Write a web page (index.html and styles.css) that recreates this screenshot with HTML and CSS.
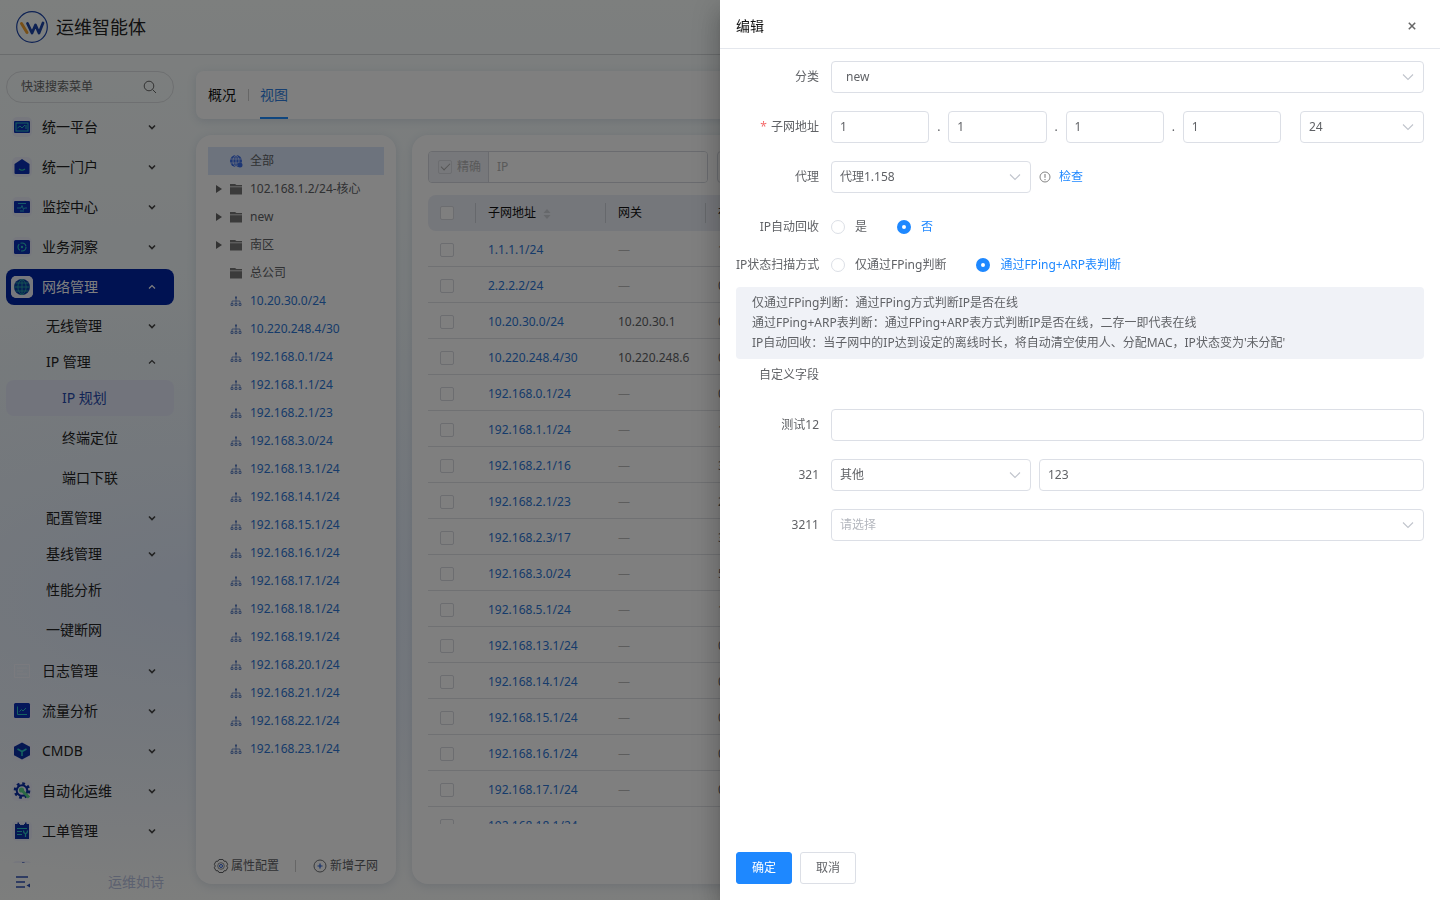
FILE: index.html
```html
<!DOCTYPE html>
<html lang="zh-CN">
<head>
  <meta charset="UTF-8">
  <title>运维智能体</title>
  <meta name="viewport" content="width=device-width,initial-scale=1">
  <link rel="stylesheet" href="styles.css">
</head>
<body>
  <!-- shared icons -->
  <svg class="sprite" aria-hidden="true">
    <symbol id="i-down" viewBox="0 0 12 12"><path d="M3 4.500l3 3 3-3" fill="none" stroke="currentColor" stroke-width="1.600"/></symbol>
    <symbol id="i-up" viewBox="0 0 12 12"><path d="M3 7.500l3-3 3 3" fill="none" stroke="currentColor" stroke-width="1.200"/></symbol>
    <symbol id="i-arrow" viewBox="0 0 12 12"><path d="M1 3.500l5 5 5-5" fill="none" stroke="currentColor" stroke-width="1.100"/></symbol>
    <symbol id="i-folder" viewBox="0 0 14 14"><path d="M1 2h5l1.500 1h5.500v1.500H1z"/><path d="M1 5.200h12V12.500H1z"/></symbol>
    <symbol id="i-net" viewBox="0 0 14 14">
      <path d="M7 4v5M3 9V7h8v2" fill="none" stroke="currentColor" stroke-width=".8"/>
      <path d="M6 2.500h2v2H6z"/>
      <path d="M2 9.500h2v2H2zM6 9.500h2v2H6zM10 9.500h2v2h-2z" fill="none" stroke="currentColor" stroke-width=".9"/>
    </symbol>
    <symbol id="i-globe" viewBox="0 0 14 14">
      <circle cx="7" cy="7" r="6"/>
      <path d="M1 5h12M1 9h12M7 1v12M7 1C3 4 3 10 7 13M7 1c4 3 4 9 0 12" fill="none" stroke="#dfe9ff" stroke-width=".7"/>
      <circle cx="11" cy="11" r="2.500"/>
    </symbol>
    <symbol id="m-platform" viewBox="0 0 20 20">
      <rect x="2" y="4" width="16" height="12" rx="1" fill="#0a2fb4"/>
      <rect x="4" y="6" width="12" height="8" fill="none" stroke="#2bc4c0" stroke-width="1"/>
      <path d="M5.500 11l2.500-2 2 2 3-3M14 8v4" fill="none" stroke="#2bc4c0"/>
    </symbol>
    <symbol id="m-portal" viewBox="0 0 20 20">
      <path d="M10 2l7.500 5v9q0 1-1 1h-13q-1 0-1-1V7z" fill="#0a2fb4"/>
      <path d="M7 12q3 2.500 6 0" fill="none" stroke="#2bc4a0" stroke-width="1.200"/>
    </symbol>
    <symbol id="m-monitor" viewBox="0 0 20 20">
      <rect x="2" y="4" width="16" height="12" rx="1" fill="#0a2fb4"/>
      <path d="M6 6.500h8M5 11h4l1-2.500 1.500 4 1-1.500H15M8 14h4" fill="none" stroke="#2bb4d0"/>
    </symbol>
    <symbol id="m-insight" viewBox="0 0 20 20">
      <rect x="2" y="3" width="16" height="14" rx="1.500" fill="#0a2fb4"/>
      <circle cx="10" cy="10" r="4" fill="none" stroke="#2bc4c0" stroke-width="1.200" stroke-dasharray="7 1.400"/>
      <circle cx="10" cy="10" r="1.200" fill="#2bc4c0"/>
    </symbol>
    <symbol id="m-network" viewBox="0 0 22 22">
      <rect width="22" height="22" rx="5" fill="#eef1fb"/>
      <circle cx="11" cy="11" r="8" fill="#0a3fa4"/>
      <path d="M3 11h16M4.500 7h13M4.500 15h13M11 3v16M11 3C5.500 7 5.500 15 11 19M11 3c5.500 4 5.500 12 0 16" fill="none" stroke="#2baaa8" stroke-width=".9"/>
    </symbol>
    <symbol id="m-log" viewBox="0 0 20 20">
      <path d="M2.500 3.500h15v13h-15zM5 7h10M5 10h6M5 13h10" fill="none" stroke="#f8f6fc" stroke-opacity=".8"/>
    </symbol>
    <symbol id="m-flow" viewBox="0 0 20 20">
      <rect x="2" y="2" width="16" height="15" rx="1.500" fill="#0a2fb4"/>
      <path d="M5.500 5.500v8H15M7.500 10.500l2-2 1.500 1.500 3-3" fill="none" stroke="#2bc4c0"/>
    </symbol>
    <symbol id="m-cmdb" viewBox="0 0 20 20">
      <path d="M10 1.500l8 4.300v8.400l-8 4.300-8-4.300V5.800z" fill="#0a2fa4"/>
      <path d="M5.500 8L10 10.500 14.500 8M10 10.500V15" fill="none" stroke="#2bc4c0" stroke-width="1.600"/>
    </symbol>
    <symbol id="m-auto" viewBox="0 0 20 20">
      <circle cx="10" cy="9.500" r="7" fill="none" stroke="#0a2fa4" stroke-width="2.600" stroke-dasharray="2.750"/>
      <circle cx="10" cy="9.500" r="5.300" fill="none" stroke="#0a2fa4" stroke-width="2"/>
      <circle cx="9.500" cy="9" r="2.600" fill="#5ad48a"/>
      <path d="M11 10.500l6 6" stroke="#5ad48a" stroke-width="3"/>
    </symbol>
    <symbol id="m-order" viewBox="0 0 20 20">
      <path d="M3 3h14v15H3z" fill="#0a2fa4"/>
      <path d="M5.500 1.500H7v3H5.500zM13 1.500h1.500v3H13z" fill="#0a2fa4"/>
      <path d="M8 3.500h4" stroke="#dfe5f8"/>
      <path d="M5 7.500h10M5 10.500h5M5 13.500h5M13.500 16v-4M11.500 9.500q0 3 2 3t2-3" fill="none" stroke="#2bc4c0" stroke-width="1.200"/>
    </symbol>
  </svg>

  <div class="app">
    <header class="topbar">
      <svg class="logo" viewBox="0 0 32 32">
        <circle cx="16" cy="16" r="15.300" fill="none" stroke="#1c44a8" stroke-width="1.200"/>
        <path d="M5.500 12.500l5.500 9" stroke="#f0a030" stroke-width="3" stroke-linecap="round"/>
        <path d="M11.500 12.500l4.500 9.500 3.500-8 3.500 8 4-10" fill="none" stroke="#1c44a8" stroke-width="2.800" stroke-linecap="round" stroke-linejoin="round"/>
      </svg>
      <span class="brand">运维智能体</span>
    </header>

    <div class="layout">
      <aside class="sidebar">
        <label class="menu-search">
          <input type="text" placeholder="快速搜索菜单" aria-label="快速搜索菜单">
          <svg viewBox="0 0 14 14"><circle cx="6" cy="6" r="4.800" fill="none" stroke="currentColor"/><path d="M9.500 9.500l3.500 3.500" stroke="currentColor"/></svg>
        </label>
        <nav class="menu" id="menu"></nav>
        <div class="side-foot">
          <svg viewBox="0 0 14 14"><path d="M0 2h12M0 7h9M0 12h9" stroke="#2b4fb4" stroke-width="1.300"/><path d="M14 8.500v4l-3.500-2z" fill="#2b4fb4"/></svg>
          <span>运维如诗</span>
        </div>
      </aside>

      <main class="main">
        <div class="card tabs">
          <a href="#" class="tab">概况</a>
          <i class="tab-line"></i>
          <a href="#" class="tab active">视图</a>
        </div>
        <div class="panels">
          <section class="card tree-card">
            <ul class="tree" id="tree"></ul>
            <div class="tree-foot">
              <button type="button">
                <svg viewBox="0 0 16 16" fill="none" stroke="currentColor"><path d="M6 1.500h4l1 1.700 2 .1 1.700 3-1 1.700 1 1.700-1.700 3-2 .1-1 1.700H6l-1-1.700-2-.1-1.700-3 1-1.700-1-1.700 1.700-3 2-.1z"/><circle cx="8" cy="8" r="3.300" stroke-width=".7"/><circle cx="8" cy="8" r="1.500" stroke="#2b5fd4"/></svg>属性配置
              </button>
              <i class="tab-line"></i>
              <button type="button">
                <svg viewBox="0 0 16 16" fill="none" stroke="currentColor"><circle cx="8" cy="8" r="6" stroke-width=".9"/><path d="M5.500 8h5M8 5.500v5" stroke="#2b5fd4" stroke-width="1.200"/></svg>新增子网
              </button>
            </div>
          </section>

          <section class="card table-card">
            <div class="filters">
              <div class="ip-filter">
                <label class="exact"><input type="checkbox" class="check" checked disabled>精确</label>
                <input type="text" placeholder="IP" aria-label="IP">
              </div>
              <input type="text" class="filter-input" aria-label="关键字">
            </div>
            <div class="table-wrap">
              <table>
                <colgroup><col class="c-check"><col class="c-sub"><col class="c-gw"><col></colgroup>
                <thead>
                  <tr>
                    <th><input type="checkbox" class="check" aria-label="全选"></th>
                    <th>子网地址 <svg class="sort" viewBox="0 0 8 12"><path d="M4 1l3.500 4h-7zM4 11l3.500-4h-7z"/></svg></th>
                    <th>网关</th>
                    <th>在线</th>
                  </tr>
                </thead>
                <tbody id="rows"></tbody>
              </table>
            </div>
          </section>
        </div>
      </main>
    </div>
  </div>

  <div class="mask"></div>

  <!-- edit drawer -->
  <form class="drawer">
    <header class="drawer-head">
      <h2>编辑</h2>
      <button type="button" class="close" aria-label="关闭"><svg viewBox="0 0 10 10"><path d="M1 1l8 8M9 1l-8 8" stroke="currentColor" stroke-width="1.900"/></svg></button>
    </header>

    <div class="drawer-body">
      <div class="field">
        <label for="category">分类</label>
        <div class="control">
          <div class="select wide-pad"><select id="category"><option>new</option></select><svg><use href="#i-arrow"/></svg></div>
        </div>
      </div>

      <div class="field required">
        <label for="oct1">子网地址</label>
        <div class="control octets">
          <input class="input" type="text" id="oct1" value="1"><span>.</span>
          <input class="input" type="text" value="1" aria-label="第二段"><span>.</span>
          <input class="input" type="text" value="1" aria-label="第三段"><span>.</span>
          <input class="input" type="text" value="1" aria-label="第四段">
          <div class="select bits"><select aria-label="掩码位"><option>24</option></select><svg><use href="#i-arrow"/></svg></div>
        </div>
      </div>

      <div class="field">
        <label for="agent">代理</label>
        <div class="control">
          <div class="select short"><select id="agent"><option>代理1.158</option></select><svg><use href="#i-arrow"/></svg></div>
          <svg class="info" viewBox="0 0 12 12"><circle cx="6" cy="6" r="5" fill="none" stroke="currentColor" stroke-width=".9"/><path d="M6 3v3.800M6 8v1.200" stroke="currentColor"/></svg>
          <a href="#" class="link">检查</a>
        </div>
      </div>

      <div class="field tight" role="radiogroup" aria-labelledby="recycleLabel">
        <span class="label" id="recycleLabel">IP自动回收</span>
        <div class="control radios">
          <label><input type="radio" name="recycle"><span>是</span></label>
          <label><input type="radio" name="recycle" checked><span>否</span></label>
        </div>
      </div>

      <div class="field tight" role="radiogroup" aria-labelledby="scanLabel">
        <span class="label" id="scanLabel">IP状态扫描方式</span>
        <div class="control radios">
          <label><input type="radio" name="scan"><span>仅通过FPing判断</span></label>
          <label><input type="radio" name="scan" checked><span>通过FPing+ARP表判断</span></label>
        </div>
      </div>

      <div class="tips">
        <p>仅通过FPing判断：通过FPing方式判断IP是否在线</p>
        <p>通过FPing+ARP表判断：通过FPing+ARP表方式判断IP是否在线，二存一即代表在线</p>
        <p>IP自动回收：当子网中的IP达到设定的离线时长，将自动清空使用人、分配MAC，IP状态变为'未分配'</p>
      </div>

      <div class="field"><span class="label">自定义字段</span></div>

      <div class="field">
        <label for="test12">测试12</label>
        <div class="control"><input class="input" type="text" id="test12"></div>
      </div>

      <div class="field">
        <label for="f321">321</label>
        <div class="control">
          <div class="select short"><select id="f321"><option>其他</option></select><svg><use href="#i-arrow"/></svg></div>
          <input class="input" type="text" value="123" aria-label="321 其他">
        </div>
      </div>

      <div class="field">
        <label for="f3211">3211</label>
        <div class="control">
          <div class="select empty"><select id="f3211"><option>请选择</option></select><svg><use href="#i-arrow"/></svg></div>
        </div>
      </div>
    </div>

    <footer class="drawer-foot">
      <button type="submit" class="btn primary">确定</button>
      <button type="button" class="btn">取消</button>
    </footer>
  </form>

  <script>
  /* menu: [text, level, arrow, icon, state] */
  const menu=[
    ["统一平台",1,"down","platform"],
    ["统一门户",1,"down","portal"],
    ["监控中心",1,"down","monitor"],
    ["业务洞察",1,"down","insight"],
    ["网络管理",1,"up","network","open"],
    ["无线管理",2,"down"],
    ["IP 管理",2,"up"],
    ["IP 规划",3,"","","current"],
    ["终端定位",3],
    ["端口下联",3],
    ["配置管理",2,"down"],
    ["基线管理",2,"down"],
    ["性能分析",2,"","","leaf"],
    ["一键断网",2,"","","leaf"],
    ["日志管理",1,"down","log"],
    ["流量分析",1,"down","flow"],
    ["CMDB",1,"down","cmdb"],
    ["自动化运维",1,"down","auto"],
    ["工单管理",1,"down","order"],
    ["",1,"","auto"]
  ];
  document.getElementById("menu").innerHTML=menu.map(([text,level,arrow,icon,state])=>`
    <a href="#" class="menu-item level-${level} ${state||""}">
      ${icon?`<svg class="menu-icon ${icon}"><use href="#m-${icon}"/></svg>`:""}
      <span>${text}</span>
      ${arrow?`<svg class="menu-arrow"><use href="#i-${arrow}"/></svg>`:""}
    </a>`).join("");

  /* subnet tree */
  const folders=[["102.168.1.2/24-核心",true],["new",true],["南区",true],["总公司",false]];
  const nets=["10.20.30.0/24","10.220.248.4/30","192.168.0.1/24","192.168.1.1/24","192.168.2.1/23","192.168.3.0/24",
    "192.168.13.1/24","192.168.14.1/24","192.168.15.1/24","192.168.16.1/24","192.168.17.1/24","192.168.18.1/24",
    "192.168.19.1/24","192.168.20.1/24","192.168.21.1/24","192.168.22.1/24","192.168.23.1/24"];
  const node=(cls,icon,text,caret)=>`
    <li class="${cls}"><i class="caret${caret?" show":""}"></i><svg><use href="#i-${icon}"/></svg><span>${text}</span></li>`;
  document.getElementById("tree").innerHTML=
    node("root","globe","全部")+
    folders.map(([t,c])=>node("folder","folder",t,c)).join("")+
    nets.map(t=>node("net","net",t)).join("");

  /* subnet table */
  const rows=[
    ["1.1.1.1/24","",1],["2.2.2.2/24","",0],["10.20.30.0/24","10.20.30.1",0],["10.220.248.4/30","10.220.248.6",0],
    ["192.168.0.1/24","",0],["192.168.1.1/24","",1],["192.168.2.1/16","",3],["192.168.2.1/23","",2],
    ["192.168.2.3/17","",3],["192.168.3.0/24","",5],["192.168.5.1/24","",1],["192.168.13.1/24","",0],
    ["192.168.14.1/24","",0],["192.168.15.1/24","",0],["192.168.16.1/24","",0],["192.168.17.1/24","",0],
    ["192.168.18.1/24","",4]
  ];
  document.getElementById("rows").innerHTML=rows.map(([net,gw,n])=>`
    <tr>
      <td><input type="checkbox" class="check" aria-label="${net}"></td>
      <td><a href="#">${net}</a></td>
      <td>${gw||'<span class="none">—</span>'}</td>
      <td>${n}</td>
    </tr>`).join("");
  </script>
</body>
</html>
```
FILE: styles.css
```css
*{box-sizing:border-box}
body{
  margin:0;height:100vh;overflow:hidden;color:#606266;
  font:12px/20px "Noto Sans","Noto Sans CJK SC",sans-serif
}
input,select,button{font:inherit;color:inherit;outline:none}
input{min-width:0}
a{text-decoration:none;color:inherit}
ul{list-style:none;margin:0;padding:0}
svg{flex:none}
.sprite{position:absolute;width:0;height:0}

/* page shell */
.app{
  height:100vh;display:flex;flex-direction:column;
  background:
    radial-gradient(ellipse at 14% 66%,#dfe9fa 0,rgba(226,236,250,.6) 14%,rgba(240,246,252,0) 34%),
    linear-gradient(#fafefd,#eff6f9 40%,#f0f4f9 80%,#fafcfb)
}
.topbar{height:55px;flex:none;display:flex;align-items:center;gap:8px;padding:0 16px;border-bottom:1px solid #d4d8da}
.logo{width:32px;height:32px}
.brand{font-size:18px;line-height:26px;color:#222}
.layout{flex:1;min-height:0;display:flex}

/* sidebar */
.sidebar{width:180px;flex:none;display:flex;flex-direction:column;padding:16px 6px 0}
.menu-search{
  height:32px;flex:none;display:flex;align-items:center;padding:0 16px 0 14px;
  border:1px solid #dcdfe2;border-radius:16px;color:#666
}
.menu-search input{flex:1;border:0;background:none;padding:0}
.menu-search input::placeholder{color:#666}
.menu-search svg{width:14px;height:14px}
.menu{flex:1;min-height:0;overflow:hidden;margin-top:6px}
.menu-item{
  height:36px;display:flex;align-items:center;margin-bottom:4px;padding:0 16px 0 6px;
  border-radius:8px;font-size:14px;color:#222
}
.menu-item span{flex:1}
.menu-icon{width:20px;height:20px;margin-right:10px;border-radius:5px;background:#eceffb}
.menu-icon.log{background:none}
.menu-arrow{width:12px;height:12px;color:#444}
.level-2{padding-left:40px;margin-bottom:0}
.level-2.leaf{margin-bottom:4px}
.leaf+.level-1{margin-top:5px}
.level-3{padding-left:56px}
.menu-item.open{margin-bottom:3px;background:#0024a4;color:#fff;padding-left:5px}
.open .menu-icon{width:22px;height:22px;margin-right:9px}
.open .menu-arrow{color:#fff}
.menu-item.current{background:#e4e9f8;color:#2448ac}
.side-foot{height:37px;flex:none;display:flex;align-items:center;justify-content:space-between;padding:0 10px;font-size:14px;color:#b8c2e0}
.side-foot svg{width:14px;height:14px}

/* content cards */
.main{flex:1;min-width:0;display:flex;flex-direction:column;gap:16px;padding:16px}
.card{background:#fff;border-radius:16px;box-shadow:0 2px 10px rgba(60,90,130,.16)}
.tabs{height:48px;flex:none;display:flex;align-items:center;padding:0 12px;border-radius:8px}
.tab{height:48px;line-height:48px;font-size:14px;color:#111}
.tab.active{color:#2f7fe0;border-bottom:2px solid #1e8cff}
.tab-line{width:1px;height:12px;background:#ccc}
.tabs .tab-line{margin:0 11px 0 12px}
.panels{flex:1;min-height:0;display:flex;gap:16px}

/* tree */
.tree-card{width:200px;flex:none;display:flex;flex-direction:column;padding:12px 12px 3px}
.tree{flex:1;min-height:0;overflow:hidden}
.tree li{height:28px;display:flex;align-items:center;padding-left:8px;white-space:nowrap}
.tree svg{width:14px;height:14px;margin:0 7px 0 5px;fill:currentColor}
.caret{width:8px;height:8px}
.caret.show{width:0;height:0;border:4px solid transparent;border-left:6px solid #666;border-right:0;margin-right:2px}
.root{background:#dbe7fa}
.root svg{color:#3b6ee8}
.folder svg{color:#777}
.tree .net{color:#2d76d4}
.net svg{color:#5a7fc4}
.tree-foot{height:30px;display:flex;align-items:center;justify-content:space-between;padding:0 6px 0 5px}
.tree-foot button{display:flex;align-items:center;gap:2px;padding:0;border:0;background:none;cursor:pointer}
.tree-foot svg{width:16px;height:16px}

/* table */
.table-card{flex:1;min-width:0;display:flex;flex-direction:column;padding:16px 16px 60px}
.filters{display:flex;gap:9px;margin-bottom:12px}
.ip-filter{width:280px;height:32px;display:flex;border:1px solid #d4d7de;border-radius:4px;overflow:hidden}
.exact{display:flex;align-items:center;gap:5px;padding:0 7px 0 9px;background:#eff1f6;border-right:1px solid #d4d7de;color:#b4b4b4}
.ip-filter input[type=text]{flex:1;border:0;padding:0 8px}
.ip-filter input::placeholder{color:#b4b4b4}
.filter-input{width:200px;border:1px solid #d4d7de;border-radius:4px;background:#fff}
.check{
  appearance:none;display:block;width:14px;height:14px;margin:0;
  border:1px solid #d8dae0;border-radius:2px;background:#fff
}
.exact .check{background:none}
.check:checked::after{
  content:"";display:block;width:4px;height:8px;margin:0 auto;
  border:solid #aaa;border-width:0 1px 1px 0;transform:rotate(45deg)
}
.table-wrap{flex:1;min-height:0;overflow:hidden}
table{width:100%;table-layout:fixed;border-collapse:separate;border-spacing:0}
.c-check{width:48px}
.c-sub{width:130px}
.c-gw{width:100px}
th,td{height:36px;padding:0 12px;text-align:left;font-weight:normal;white-space:nowrap}
th{
  color:#111;background:linear-gradient(#ccd0d8,#ccd0d8) right center/1px 20px no-repeat #ebeef6
}
th:first-child{border-radius:8px 0 0 8px}
th:last-child{border-radius:0 8px 8px 0}
td{padding-top:2px;border-bottom:1px solid #e0e2e6}
td a{color:#2d76d4}
.none{color:#bbb}
.sort{width:8px;height:12px;margin-left:4px;vertical-align:middle;fill:#ccd0d6}

.mask{position:fixed;inset:0;background:rgba(0,0,0,.5);z-index:10}

/* drawer */
.drawer{
  position:fixed;top:0;right:0;bottom:0;width:50%;z-index:20;display:flex;flex-direction:column;background:#fff;
  box-shadow:0 8px 10px -5px rgba(0,0,0,.2),0 16px 24px 2px rgba(0,0,0,.14),0 6px 30px 5px rgba(0,0,0,.12)
}
.drawer-head{display:flex;align-items:center;justify-content:space-between;height:49px;padding:4px 24px 0 16px;border-bottom:1px solid #e4e7ed}
.drawer-head h2{margin:0;font-size:14px;font-weight:400;color:#111}
.close{display:flex;padding:0;border:0;background:none;color:#666;cursor:pointer}
.close svg{width:8px;height:8px}
.drawer-body{flex:1;min-height:0;overflow:auto;padding:12px 16px}
.field{display:flex;align-items:center;min-height:32px;margin-bottom:18px}
.field.tight{margin-bottom:6px}
.field>label,.field>.label{width:83px;flex:none;margin-right:12px;text-align:right;white-space:nowrap}
.required>label::before{content:"*";color:#f56c6c;margin-right:4px}
.control{flex:1;min-width:0;display:flex;align-items:center;gap:8px}
.input,.select select{width:100%;height:32px;padding:0 8px;border:1px solid #dcdfe6;border-radius:4px;background:#fff}
.input{padding-bottom:2px}
.select{flex:1;position:relative}
.select select{appearance:none;display:block}
.select svg{position:absolute;right:10px;top:10px;width:12px;height:12px;color:#c0c4cc;pointer-events:none}
.select.short{flex:none;width:200px}
.select.wide-pad select{padding-left:14px}
.select.empty select{color:#b4b7be}
.octets{gap:0}
.octets .input{flex:1}
.octets>span{width:19px;text-align:center}
.select.bits{flex:none;width:124px;margin-left:19px}
.info{width:12px;height:12px;color:#777}
.link{color:#1e88ff}
.radios{gap:30px}
.radios label{display:flex;align-items:center;gap:10px;cursor:pointer}
.radios input{appearance:none;width:14px;height:14px;margin:0;border:1px solid #dcdfe6;border-radius:50%;background:#fff}
.radios input:checked{border:5px solid #1e88ff}
.radios input:checked+span{color:#1e88ff}
.tips{padding:6px 16px;border-radius:4px;background:#f0f2f7}
.tips p{margin:0}
.drawer-foot{display:flex;gap:8px;padding:16px}
.btn{width:56px;height:32px;padding:0;border:1px solid #dcdfe6;border-radius:3px;background:#fff;cursor:pointer}
.btn.primary{border-color:#1e88ff;background:#1e88ff;color:#fff}
```
